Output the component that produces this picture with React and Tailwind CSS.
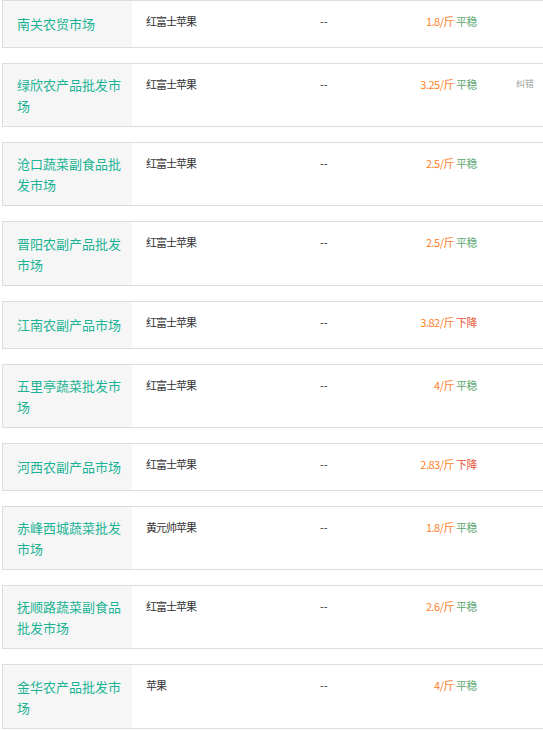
import React from "react";

const rows = [
  { name: "南关农贸市场", kind: "红富士苹果", price: "1.8/斤", trend: "平稳" },
  { name: "绿欣农产品批发市场", kind: "红富士苹果", price: "3.25/斤", trend: "平稳", fix: true },
  { name: "沧口蔬菜副食品批发市场", kind: "红富士苹果", price: "2.5/斤", trend: "平稳" },
  { name: "晋阳农副产品批发市场", kind: "红富士苹果", price: "2.5/斤", trend: "平稳" },
  { name: "江南农副产品市场", kind: "红富士苹果", price: "3.82/斤", trend: "下降" },
  { name: "五里亭蔬菜批发市场", kind: "红富士苹果", price: "4/斤", trend: "平稳" },
  { name: "河西农副产品市场", kind: "红富士苹果", price: "2.83/斤", trend: "下降" },
  { name: "赤峰西城蔬菜批发市场", kind: "黄元帅苹果", price: "1.8/斤", trend: "平稳" },
  { name: "抚顺路蔬菜副食品批发市场", kind: "红富士苹果", price: "2.6/斤", trend: "平稳" },
  { name: "金华农产品批发市场", kind: "苹果", price: "4/斤", trend: "平稳" },
];

export default function App() {
  return (
    <div
      className="w-[543px] h-[730px] overflow-hidden bg-white"
      style={{ fontFamily: '"Noto Sans CJK SC", "Microsoft YaHei", sans-serif' }}
    >
      <div className="ml-[2px] w-[620px]">
        {rows.map((r, i) => (
          <div key={i} className="flex border border-[#dddddd] mb-[15px]">
            <div className="w-[129px] shrink-0 bg-[#f6f6f6] flex items-center min-h-[45.7px] pl-[14px] pr-[8px] py-[10.2px] text-[13px] leading-[21px] text-[#1ab394]">
              {r.name}
            </div>
            <div className="w-[188px] shrink-0 pl-[14px] pt-[12px] text-[11px] tracking-[-1px] leading-[16px] text-[#333333]">
              {r.kind}
            </div>
            <div className="w-[60px] shrink-0 pt-[12px] text-[11px] leading-[16px] text-[#333333]">
              --
            </div>
            <div className="w-[97px] shrink-0 pt-[12px] text-[11px] tracking-[-0.5px] leading-[16px] text-right whitespace-nowrap">
              <span className="text-[#ff7e1f]">{r.price}</span>{" "}
              <span className={r.trend === "下降" ? "text-[#e8573c]" : "text-[#5fa874]"}>{r.trend}</span>
            </div>
            <div className="pl-[39px] pt-[13px] text-[9px] leading-[14px] text-[#a0a0a0] whitespace-nowrap">
              {r.fix ? "纠错" : ""}
            </div>
          </div>
        ))}
      </div>
    </div>
  );
}
